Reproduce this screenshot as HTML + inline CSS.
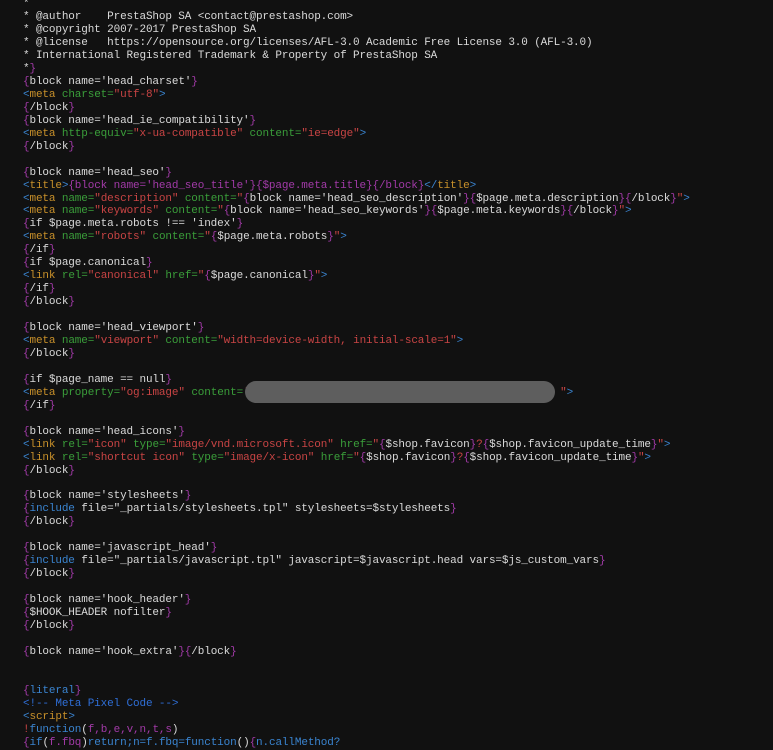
<!DOCTYPE html>
<html><head><meta charset="utf-8"><style>
html,body{margin:0;padding:0;background:#111111;width:773px;height:750px;overflow:hidden}
pre{position:absolute;left:23px;top:-1.8px;margin:0;font-family:"Liberation Mono",monospace;font-size:11px;letter-spacing:-0.13px;line-height:12.96px;color:#dadada}
.p{color:#a23aa8}.t{color:#c8902a}.b{color:#3a84d0}.g{color:#3a9e3a}.r{color:#c84444}.c{color:#2f6fd8}.k{color:#3a84d0}
.red{position:absolute;left:245px;top:381px;width:310px;height:22px;border-radius:11px;background:#5e5e5e}
</style></head><body>
<pre>*
* @author    PrestaShop SA &lt;contact@prestashop.com&gt;
* @copyright 2007-2017 PrestaShop SA
* @license   https://opensource.org/licenses/AFL-3.0 Academic Free License 3.0 (AFL-3.0)
* International Registered Trademark &amp; Property of PrestaShop SA
*<span class="p">}</span>
<span class="p">{</span>block name='head_charset'<span class="p">}</span>
<span class="b">&lt;</span><span class="t">meta</span> <span class="g">charset=</span><span class="r">"utf-8"</span><span class="b">&gt;</span>
<span class="p">{</span>/block<span class="p">}</span>
<span class="p">{</span>block name='head_ie_compatibility'<span class="p">}</span>
<span class="b">&lt;</span><span class="t">meta</span> <span class="g">http-equiv=</span><span class="r">"x-ua-compatible"</span> <span class="g">content=</span><span class="r">"ie=edge"</span><span class="b">&gt;</span>
<span class="p">{</span>/block<span class="p">}</span>

<span class="p">{</span>block name='head_seo'<span class="p">}</span>
<span class="b">&lt;</span><span class="t">title</span><span class="b">&gt;</span><span class="p">{block name='head_seo_title'}{$page.meta.title}{/block}</span><span class="b">&lt;/</span><span class="t">title</span><span class="b">&gt;</span>
<span class="b">&lt;</span><span class="t">meta</span> <span class="g">name=</span><span class="r">"description"</span> <span class="g">content=</span><span class="r">"</span><span class="p">{</span>block name='head_seo_description'<span class="p">}{</span>$page.meta.description<span class="p">}{</span>/block<span class="p">}</span><span class="r">"</span><span class="b">&gt;</span>
<span class="b">&lt;</span><span class="t">meta</span> <span class="g">name=</span><span class="r">"keywords"</span> <span class="g">content=</span><span class="r">"</span><span class="p">{</span>block name='head_seo_keywords'<span class="p">}{</span>$page.meta.keywords<span class="p">}{</span>/block<span class="p">}</span><span class="r">"</span><span class="b">&gt;</span>
<span class="p">{</span>if $page.meta.robots !== 'index'<span class="p">}</span>
<span class="b">&lt;</span><span class="t">meta</span> <span class="g">name=</span><span class="r">"robots"</span> <span class="g">content=</span><span class="r">"</span><span class="p">{</span>$page.meta.robots<span class="p">}</span><span class="r">"</span><span class="b">&gt;</span>
<span class="p">{</span>/if<span class="p">}</span>
<span class="p">{</span>if $page.canonical<span class="p">}</span>
<span class="b">&lt;</span><span class="t">link</span> <span class="g">rel=</span><span class="r">"canonical"</span> <span class="g">href=</span><span class="r">"</span><span class="p">{</span>$page.canonical<span class="p">}</span><span class="r">"</span><span class="b">&gt;</span>
<span class="p">{</span>/if<span class="p">}</span>
<span class="p">{</span>/block<span class="p">}</span>

<span class="p">{</span>block name='head_viewport'<span class="p">}</span>
<span class="b">&lt;</span><span class="t">meta</span> <span class="g">name=</span><span class="r">"viewport"</span> <span class="g">content=</span><span class="r">"width=device-width, initial-scale=1"</span><span class="b">&gt;</span>
<span class="p">{</span>/block<span class="p">}</span>

<span class="p">{</span>if $page_name == null<span class="p">}</span>
<span class="b">&lt;</span><span class="t">meta</span> <span class="g">property=</span><span class="r">"og:image"</span> <span class="g">content=</span><span class="r">'                                                "</span><span class="b">&gt;</span>
<span class="p">{</span>/if<span class="p">}</span>

<span class="p">{</span>block name='head_icons'<span class="p">}</span>
<span class="b">&lt;</span><span class="t">link</span> <span class="g">rel=</span><span class="r">"icon"</span> <span class="g">type=</span><span class="r">"image/vnd.microsoft.icon"</span> <span class="g">href=</span><span class="r">"</span><span class="p">{</span>$shop.favicon<span class="p">}</span><span class="r">?</span><span class="p">{</span>$shop.favicon_update_time<span class="p">}</span><span class="r">"</span><span class="b">&gt;</span>
<span class="b">&lt;</span><span class="t">link</span> <span class="g">rel=</span><span class="r">"shortcut icon"</span> <span class="g">type=</span><span class="r">"image/x-icon"</span> <span class="g">href=</span><span class="r">"</span><span class="p">{</span>$shop.favicon<span class="p">}</span><span class="r">?</span><span class="p">{</span>$shop.favicon_update_time<span class="p">}</span><span class="r">"</span><span class="b">&gt;</span>
<span class="p">{</span>/block<span class="p">}</span>

<span class="p">{</span>block name='stylesheets'<span class="p">}</span>
<span class="p">{</span><span class="k">include</span> file="_partials/stylesheets.tpl" stylesheets=$stylesheets<span class="p">}</span>
<span class="p">{</span>/block<span class="p">}</span>

<span class="p">{</span>block name='javascript_head'<span class="p">}</span>
<span class="p">{</span><span class="k">include</span> file="_partials/javascript.tpl" javascript=$javascript.head vars=$js_custom_vars<span class="p">}</span>
<span class="p">{</span>/block<span class="p">}</span>

<span class="p">{</span>block name='hook_header'<span class="p">}</span>
<span class="p">{</span>$HOOK_HEADER nofilter<span class="p">}</span>
<span class="p">{</span>/block<span class="p">}</span>

<span class="p">{</span>block name='hook_extra'<span class="p">}{</span>/block<span class="p">}</span>


<span class="p">{</span><span class="k">literal</span><span class="p">}</span>
<span class="c">&lt;!-- Meta Pixel Code --&gt;</span>
<span class="b">&lt;</span><span class="t">script</span><span class="b">&gt;</span>
<span class="r">!</span><span class="k">function</span>(<span class="p">f,b,e,v,n,t,s</span>)
<span class="p">{</span><span class="k">if</span>(<span class="p">f.fbq</span>)<span class="k">return;n=f.fbq=function</span>()<span class="p">{</span><span class="k">n.callMethod?</span></pre>
<div class="red"></div>
</body></html>
